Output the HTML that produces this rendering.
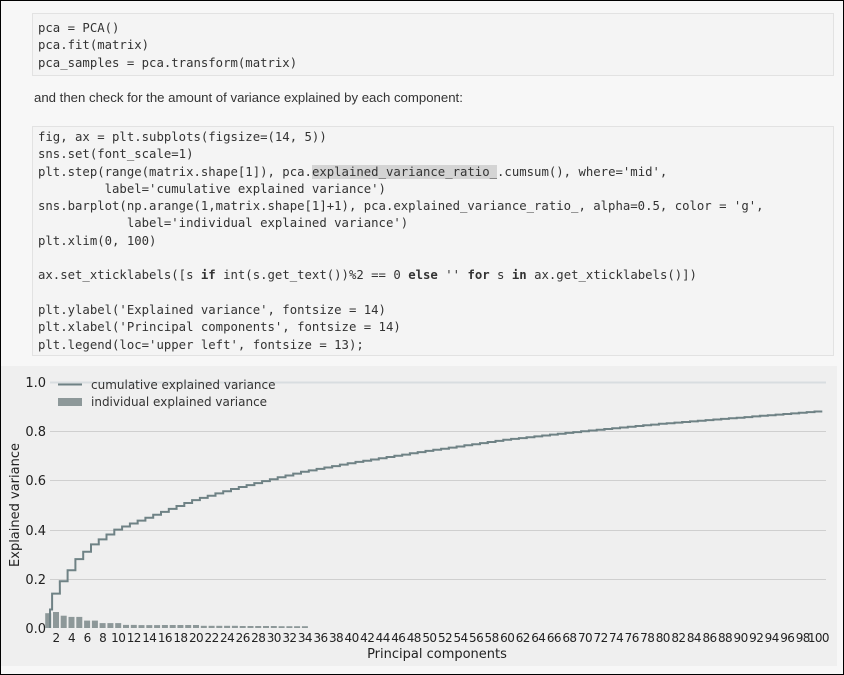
<!DOCTYPE html>
<html><head><meta charset="utf-8"><style>
html,body{margin:0;padding:0}
body{width:844px;height:675px;position:relative;overflow:hidden;background:#f7f7f7;font-family:"Liberation Sans",sans-serif}
.frame{position:absolute;left:0;top:0;width:842px;height:673px;border:1px solid #000;pointer-events:none;z-index:5}
.code{position:absolute;left:32px;width:802px;background:#f4f4f4;border:1px solid #e2e2e2;font-family:"DejaVu Sans Mono","Liberation Mono",monospace;font-size:12.3px;color:#333;white-space:pre;line-height:17.3px;padding:0 0 0 5px;box-sizing:border-box}
.code b{font-weight:bold}
.hl{background:#d4d4d4}
.p{position:absolute;left:34px;top:90px;font-size:13.2px;color:#333}
.chart{position:absolute;left:0;top:366px;width:837px;height:300px;background:#efefef}
</style></head><body>
<div class="frame"></div>
<div class="code" style="top:13px;height:63px;padding-top:6px">pca = PCA()
pca.fit(matrix)
pca_samples = pca.transform(matrix)</div>
<div class="p">and then check for the amount of variance explained by each component:</div>
<div class="code" style="top:126px;height:230px;padding-top:2px">fig, ax = plt.subplots(figsize=(14, 5))
sns.set(font_scale=1)
plt.step(range(matrix.shape[1]), pca.<span class="hl">explained_variance_ratio_</span>.cumsum(), where='mid',
         label='cumulative explained variance')
sns.barplot(np.arange(1,matrix.shape[1]+1), pca.explained_variance_ratio_, alpha=0.5, color = 'g',
            label='individual explained variance')
plt.xlim(0, 100)

ax.set_xticklabels([s <b>if</b> int(s.get_text())%2 == 0 <b>else</b> '' <b>for</b> s <b>in</b> ax.get_xticklabels()])

plt.ylabel('Explained variance', fontsize = 14)
plt.xlabel('Principal components', fontsize = 14)
plt.legend(loc='upper left', fontsize = 13);</div>
<div class="chart"></div>
<svg id="s" style="position:absolute;left:0;top:0" width="844" height="675" font-family="DejaVu Sans, Liberation Sans, sans-serif">
<g stroke="#cfcfcf" stroke-width="1">
<line x1="50" x2="826" y1="382.5" y2="382.5" stroke="#d8dde0" stroke-width="2"/>
<line x1="50" x2="826" y1="431.5" y2="431.5"/>
<line x1="50" x2="826" y1="480.5" y2="480.5"/>
<line x1="50" x2="826" y1="530.5" y2="530.5"/>
<line x1="50" x2="826" y1="579.5" y2="579.5"/>
</g>
<g font-size="13" fill="#222" text-anchor="end">
<text x="46" y="387">1.0</text><text x="46" y="436">0.8</text><text x="46" y="485">0.6</text><text x="46" y="535">0.4</text><text x="46" y="584">0.2</text><text x="46" y="633">0.0</text>
</g>
<text x="19" y="505" font-size="13" fill="#222" text-anchor="middle" transform="rotate(-90 19 505)">Explained variance</text>
<text x="437" y="658" font-size="13" fill="#222" text-anchor="middle">Principal components</text>
<g id="bars" fill="#8d9899"></g>
<path id="step" fill="none" stroke="#6f8285" stroke-width="2"/>
<g id="ticks" font-size="12" fill="#222" text-anchor="middle" letter-spacing="-0.6"></g>
<line x1="58" x2="82" y1="384.5" y2="384.5" stroke="#6f8285" stroke-width="2"/>
<rect x="58" y="398" width="24" height="8" fill="#8d9899"/>
<g font-size="12" fill="#333"><text x="91" y="389">cumulative explained variance</text><text x="91" y="406">individual explained variance</text></g>
</svg>
<script>
var tbl=[[1,.075],[2,.14],[3,.19],[4,.235],[5,.28],[6,.31],[7,.34],[8,.36],[9,.38],[10,.40],[12,.425],[15,.46],[20,.52],[25,.565],[30,.605],[34,.635],[40,.67],[50,.72],[60,.765],[70,.80],[80,.83],[90,.855],[100,.88]];
function v(i){for(var k=0;k<tbl.length-1;k++){var a=tbl[k],b=tbl[k+1];if(i>=a[0]&&i<=b[0])return a[1]+(b[1]-a[1])*(i-a[0])/(b[0]-a[0]);}return .88;}
function X(i){return 40.4+7.78*i;}function Y(val){return 628-val*246;}
var d="M50 628 L50 "+Y(v(1)).toFixed(1);var bars="";var prev=0.015;
for(var i=1;i<=100;i++){var y=Y(v(i));var x0=X(i)-3.9,x1=X(i)+3.9;if(i==1)x0=50;
d+=" L"+x0.toFixed(1)+" "+y.toFixed(1)+" L"+Math.min(x1,826).toFixed(1)+" "+y.toFixed(1);
var h=(v(i)-prev)*246;prev=v(i);if(i<=34&&h>0.5)bars+='<rect x="'+(X(i)-3).toFixed(1)+'" y="'+(628-h).toFixed(1)+'" width="6" height="'+h.toFixed(1)+'"/>';
else if(i<=34)bars+='<rect x="'+(X(i)-3).toFixed(1)+'" y="627" width="6" height="1"/>';}
document.getElementById("step").setAttribute("d",d);
document.getElementById("bars").innerHTML=bars;
var t="";for(var i=2;i<=100;i+=2)t+='<text x="'+X(i).toFixed(1)+'" y="642">'+i+'</text>';
document.getElementById("ticks").innerHTML=t;
</script>
</body></html>
